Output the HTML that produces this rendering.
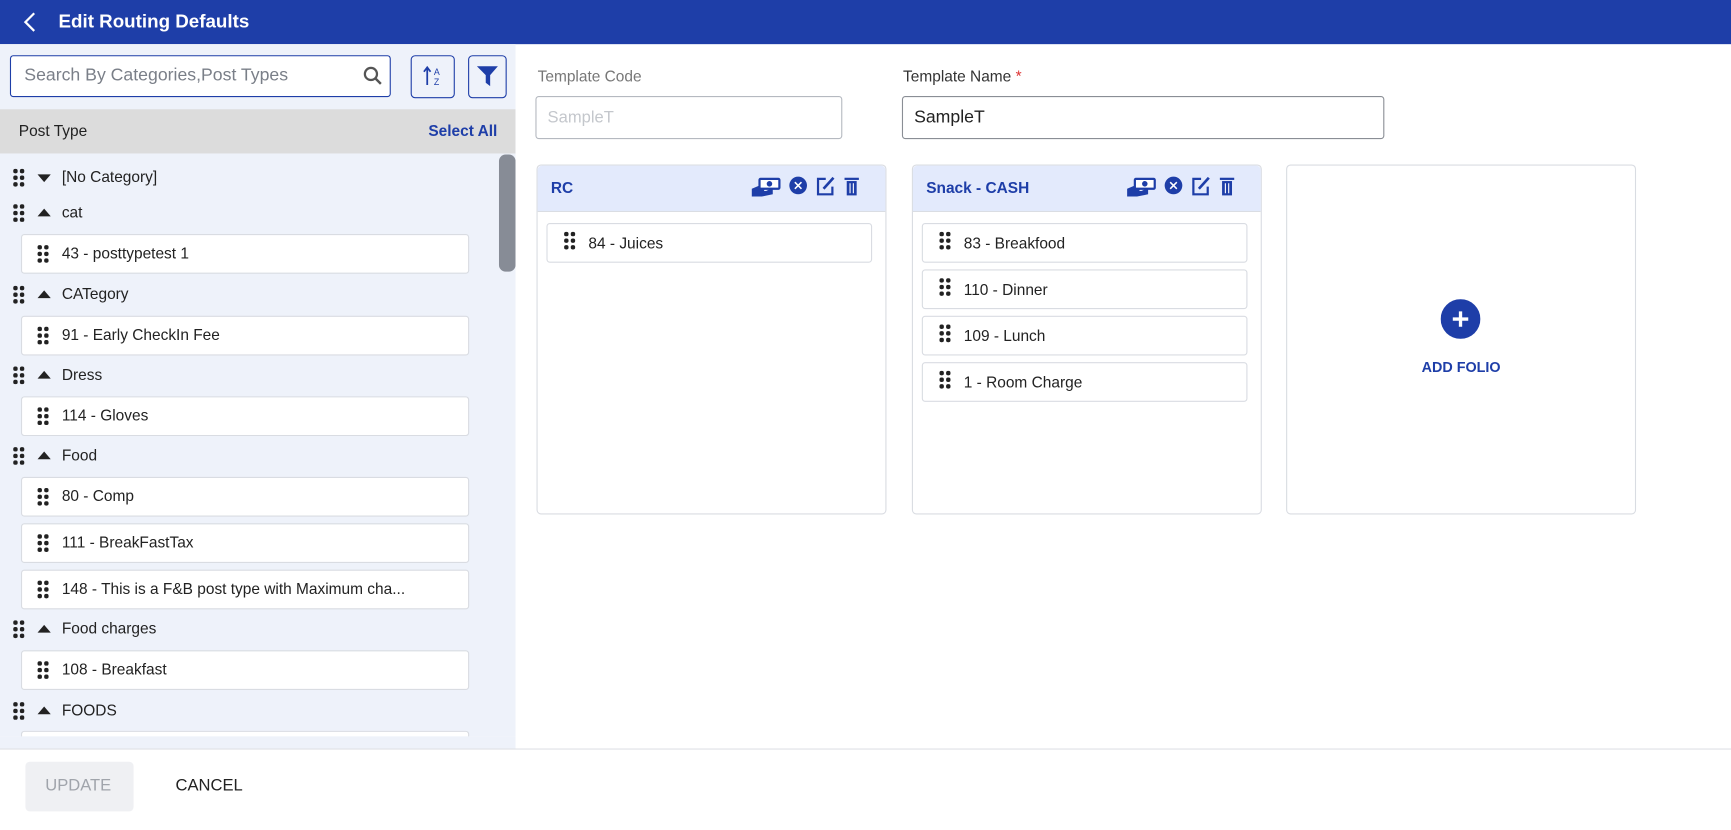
<!DOCTYPE html>
<html><head><meta charset="utf-8">
<style>
html,body{margin:0;padding:0;width:1731px;height:830px;overflow:hidden;background:#fff}
#w{position:absolute;left:0;top:0;width:1568px;height:752px;transform:scale(1.10395);transform-origin:0 0;font-family:"Liberation Sans",sans-serif;font-size:14px;color:#222}
.a{position:absolute}
.hdr{left:0;top:0;width:1568px;height:40px;background:#1e3ea8;color:#fff}
.left{left:0;top:40px;width:467px;height:627px;background:#eef2fa;overflow:hidden}
.box{background:#fff;border:1px solid #d9dce2;border-radius:3px;box-sizing:border-box}
.dots{position:absolute;width:10px;height:16px}
.dots i{position:absolute;width:3.5px;height:3.5px;border-radius:50%;background:#222}
.btn{border:1px solid #1e3ea8;border-radius:4px;box-sizing:border-box;background:#eef2fa}
.card{border:1px solid #d9dce2;border-radius:4px;box-sizing:border-box;background:#fff}
.ch{position:absolute;left:0;top:0;right:0;height:41px;background:#e3eafc;border-bottom:1px solid #d9dce2;border-radius:4px 4px 0 0}
.ct{position:absolute;left:12px;top:12px;color:#1e3ea8;font-weight:bold;font-size:14px}
</style></head><body><div id="w">
<div class="a hdr">
<svg class="a" style="left:21px;top:11px" width="12" height="18"><path d="M10 1 L2 9 L10 17" stroke="#fff" stroke-width="2" fill="none"/></svg>
<div class="a" style="left:53px;top:10px;font-size:17px;font-weight:bold">Edit Routing Defaults</div>
</div>
<div class="a" style="left:0;top:667px;width:467px;height:11px;background:#eef2fa"></div>
<div class="a left">
<div class="a box" style="left:9px;top:10px;width:345px;height:38px;border-color:#1e3ea8"></div>
<div class="a" style="left:22px;top:20px;font-size:16px;color:#7a7f88">Search By Categories,Post Types</div>
<svg class="a" style="left:329px;top:20px" width="18" height="18"><circle cx="7" cy="7" r="5.5" stroke="#555" stroke-width="2" fill="none"/><path d="M11 11 L16 16" stroke="#555" stroke-width="2.2"/></svg>
<div class="a btn" style="left:372px;top:10px;width:40px;height:39px"></div>
<svg class="a" style="left:382px;top:19px" width="22" height="20"><path d="M5 18 V3 M2 6 L5 2 L8 6" stroke="#1e3ea8" stroke-width="1.6" fill="none"/><text x="11" y="9" font-size="8" fill="#1e3ea8" font-family="Liberation Sans">A</text><text x="11" y="18" font-size="8" fill="#1e3ea8" font-family="Liberation Sans">Z</text></svg>
<div class="a btn" style="left:424px;top:10px;width:35px;height:39px"></div>
<svg class="a" style="left:431px;top:19px" width="22" height="20"><path d="M1 1 H20 L13 9 V19 L9 16 V9 Z" fill="#1e3ea8"/></svg>
<div class="a" style="left:0;top:59px;width:467px;height:40px;background:#dcdcdc"></div>
<div class="a" style="left:17px;top:70px;font-size:14px;color:#222">Post Type</div>
<div class="a" style="left:388px;top:70px;font-size:14px;font-weight:bold;color:#1e3ea8">Select All</div>
<div class="a" style="left:452px;top:100px;width:15px;height:106px;background:#878c96;border-radius:6px"></div>
<div id="list"></div>
</div>
<div class="a" style="left:0;top:678px;width:1568px;height:1px;background:#dde0e5"></div>
<div class="a" style="left:23px;top:690px;width:98px;height:45px;background:#eff0f3;border-radius:4px"></div>
<div class="a" style="left:41px;top:703px;font-size:15px;color:#a0a4ab">UPDATE</div>
<div class="a" style="left:159px;top:703px;font-size:15px;color:#222">CANCEL</div>
<div class="a" style="left:487px;top:61px;color:#777;font-size:14px">Template Code</div>
<div class="a box" style="left:485px;top:87px;width:278px;height:39px;border-color:#b5b9c0"></div>
<div class="a" style="left:496px;top:98px;color:#c4c7cc;font-size:15px">SampleT</div>
<div class="a" style="left:818px;top:61px;color:#333;font-size:14px">Template Name <span style="color:#d33">*</span></div>
<div class="a box" style="left:817px;top:87px;width:437px;height:39px;border-color:#8a8e95"></div>
<div class="a" style="left:828px;top:98px;color:#222;font-size:16px">SampleT</div>
<div id="cards"></div>
<div class="a card" style="left:1165px;top:149px;width:317px;height:317px"></div>
<svg class="a" style="left:1305px;top:271px" width="36" height="36"><circle cx="18" cy="18" r="18" fill="#1e3ea8"/><path d="M18 11 V25 M11 18 H25" stroke="#fff" stroke-width="3"/></svg>
<div class="a" style="left:1165px;top:325px;width:317px;text-align:center;color:#1e3ea8;font-weight:bold;font-size:13px">ADD FOLIO</div>
</div>
<script>
function dots(x,y){return '<div class="dots" style="left:'+x+'px;top:'+y+'px"><i style="left:0;top:0"></i><i style="left:6px;top:0"></i><i style="left:0;top:6px"></i><i style="left:6px;top:6px"></i><i style="left:0;top:12px"></i><i style="left:6px;top:12px"></i></div>';}
var L=document.getElementById('list'),h='';
var rows=[['c',161,'[No Category]',1],['c',193,'cat'],['i',212,'43 - posttypetest 1'],['c',267,'CATegory'],['i',286,'91 - Early CheckIn Fee'],['c',340,'Dress'],['i',359,'114 - Gloves'],['c',413,'Food'],['i',432,'80 - Comp'],['i',474,'111 - BreakFastTax'],['i',516,'148 - This is a F&amp;B post type with Maximum cha...'],['c',570,'Food charges'],['i',589,'108 - Breakfast'],['c',644,'FOODS'],['i',662,'']];
rows.forEach(function(r){var y=r[1]-40;if(r[0]=='c'){h+=dots(12,y-8);h+='<svg class="a" style="left:34px;top:'+(y-5)+'px" width="12" height="10"><path d="'+(r[3]?'M0 2 H12 L6 9Z':'M0 8 H12 L6 1Z')+'" fill="#222"/></svg>';h+='<div class="a" style="left:56px;top:'+(y-9)+'px">'+r[2]+'</div>';}else{h+='<div class="a box" style="left:19px;top:'+y+'px;width:406px;height:36px"></div>'+dots(34,y+10)+'<div class="a" style="left:56px;top:'+(y+9)+'px">'+r[2]+'</div>';}});
L.innerHTML=h;
function icons(x){return '<svg class="a" style="left:'+x+'px;top:159px" width="100" height="20"><path d="M1 12 L8 9 H14 L12 14 H8 L14 14 L20 11 V17 L10 19 H1Z" fill="#1e3ea8"/><rect x="8" y="3" width="18" height="9" rx="1" fill="#fff" stroke="#1e3ea8" stroke-width="2"/><circle cx="17" cy="7.5" r="2.5" fill="#1e3ea8"/><circle cx="43" cy="9" r="8" fill="#1e3ea8"/><path d="M40 6 L46 12 M46 6 L40 12" stroke="#fff" stroke-width="1.4"/><path d="M68 3 H61 V17 H74 V10" stroke="#1e3ea8" stroke-width="2" fill="none"/><path d="M66 12 L75 2" stroke="#1e3ea8" stroke-width="2.4"/><rect x="87" y="5" width="9" height="13" fill="#1e3ea8"/><rect x="85" y="2" width="13" height="2" fill="#1e3ea8"/><path d="M90 7 V16 M93 7 V16" stroke="#fff" stroke-width="1"/></svg>';}
var C=document.getElementById('cards'),c='';
function card(x,t,items,ix){c+='<div class="a card" style="left:'+x+'px;top:149px;width:317px;height:317px"><div class="ch"></div><div class="ct">'+t+'</div></div>'+icons(ix);items.forEach(function(s,k){var y=202+k*42;c+='<div class="a box" style="left:'+(x+9)+'px;top:'+y+'px;width:'+(x<600?295:295)+'px;height:36px"></div>'+dots(x+25,y+8)+'<div class="a" style="left:'+(x+47)+'px;top:'+(y+10)+'px">'+s+'</div>';});}
card(486,'RC',['84 - Juices'],680);
card(826,'Snack - CASH',['83 - Breakfood','110 - Dinner','109 - Lunch','1 - Room Charge'],1020);
C.innerHTML=c;
</script>
</body></html>
